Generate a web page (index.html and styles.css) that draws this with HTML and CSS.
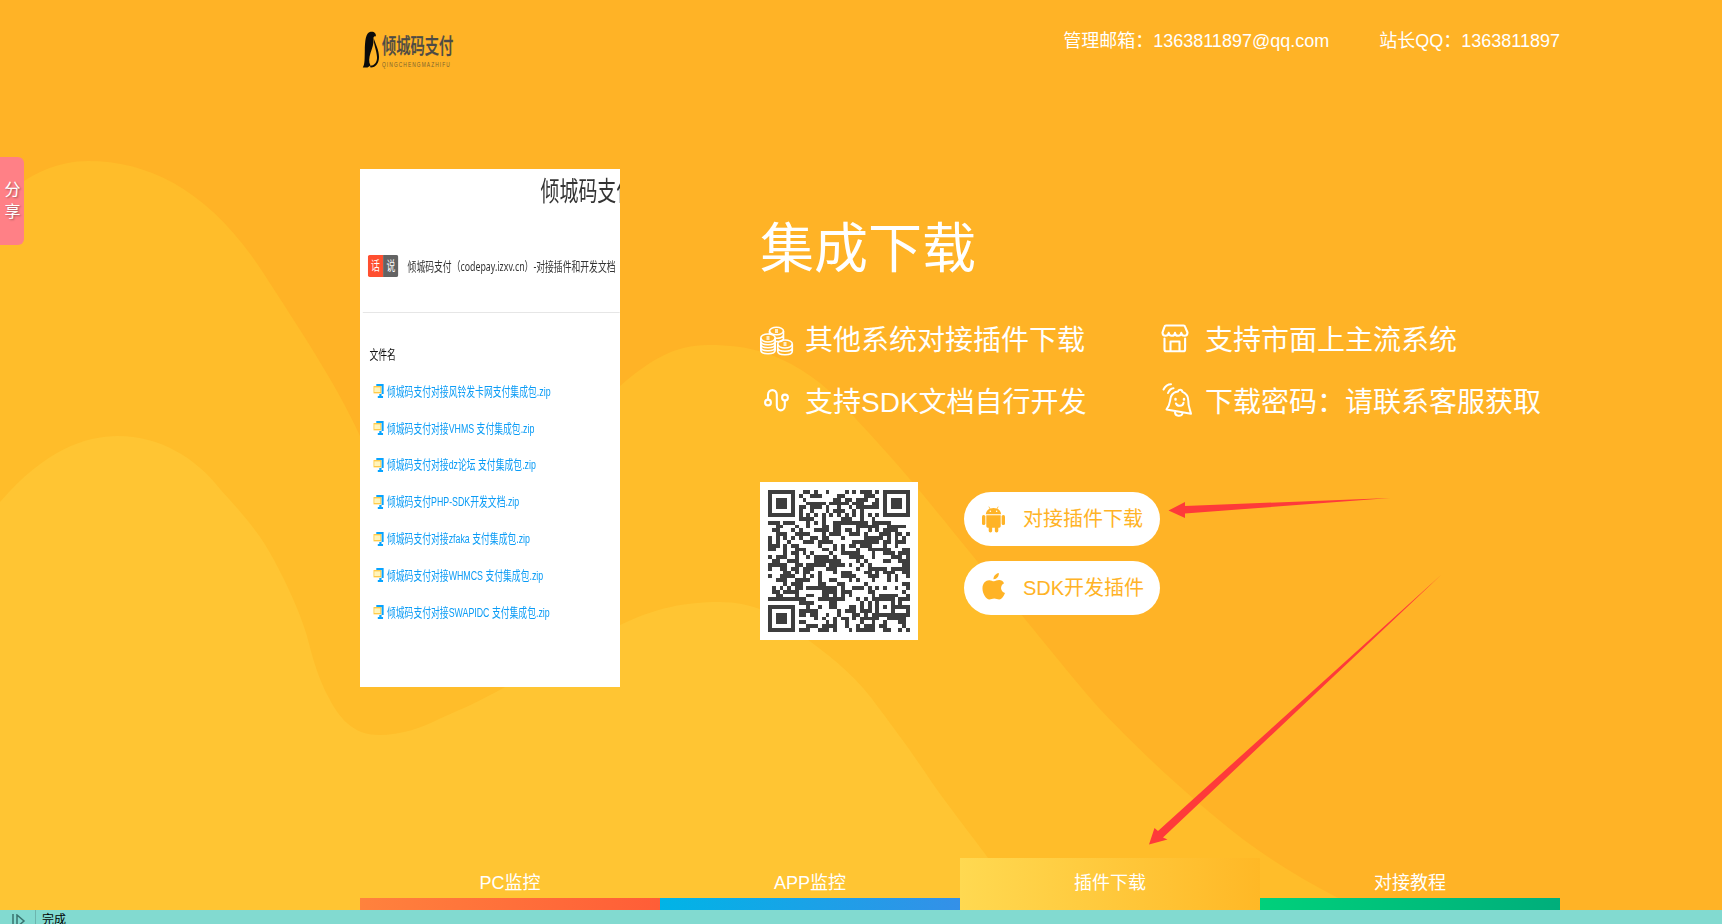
FILE: index.html
```html
<!DOCTYPE html>
<html lang="zh-CN">
<head>
<meta charset="utf-8">
<title>倾城码支付</title>
<link rel="stylesheet" href="styles.css">
</head>
<body>
<div class="page">
  <svg class="waves" viewBox="0 0 1722 910" aria-hidden="true">
    <path fill="#ffbd2a" d="M0 200C30 172 60 161 88 161C152 161 212 193 264 274C297 325 337 385 360 436C390 500 410 525 450 525C520 525 560 430 620 386C650 360 675 345 708 345C732 345 752 348 769 354C800 366 825 384 845 407C883 448 910 478 933 507C960 540 980 565 1010 601C1045 643 1070 675 1098 707C1135 746 1180 790 1244 840C1275 863 1307 882 1340 899L1362 910H0Z"/>
    <path fill="#ffc533" d="M0 502C45 450 85 436 118 436C160 436 196 458 220 489C243 514 261 535 274 560C290 590 300 613 307 636C313 660 319 680 329 698C342 724 358 735 379 735C400 735 422 728 439 719C462 709 482 700 505 687C545 664 580 644 620 625C655 608 685 602 719 602C755 602 780 616 807 639C837 661 860 681 878 707C900 736 915 757 933 784C952 811 970 833 994 866L1026 910H0Z"/>
  </svg>

  <div class="container">
    <header class="header">
      <div class="logo">
        <svg class="logo-mark" viewBox="0 0 18 38"><path fill="#0b0b0b" d="M.8 36.500C3 33 2.600 27 2.800 20C3 10 3.500 2 8.500.8C12 .2 14.500 2.500 13.800 5.500C12.500 4.800 11.200 5.500 11.500 8C12 13 10 17 8.500 22C7 27 6.500 31 8.500 34.500L5.500 36.500Z"/><path fill="#0b0b0b" d="M11.800 7.500C13.500 13 17 19 17 26C17 32.500 13.500 36.800 8.500 36.500L8 34.800C12.500 34.800 15.300 31 15 26C14.600 19 11.500 14 11.800 7.500Z"/></svg>
        <div class="logo-words"><span class="logo-cn">倾城码支付</span><span class="logo-en">QINGCHENGMAZHIFU</span></div>
      </div>
      <div class="contacts"><span>管理邮箱：1363811897@qq.com</span><span>站长QQ：1363811897</span></div>
    </header>

    <main class="main">
      <section class="shot">
        <div class="shot-inner">
          <h2 class="shot-title">倾城码支付</h2>
          <div class="notice"><span class="tag"><b>话</b><b class="dark">说</b></span><span class="notice-text">倾城码支付（codepay.izxv.cn）-对接插件和开发文档</span></div>
          <div class="rule"></div>
          <div class="col-name">文件名</div>
          <ul class="files">
            <li><svg class="zip" viewBox="0 0 14 14" preserveAspectRatio="none"><use href="#zip"/></svg>倾城码支付对接风铃发卡网支付集成包.zip</li>
            <li><svg class="zip" viewBox="0 0 14 14" preserveAspectRatio="none"><use href="#zip"/></svg>倾城码支付对接VHMS 支付集成包.zip</li>
            <li><svg class="zip" viewBox="0 0 14 14" preserveAspectRatio="none"><use href="#zip"/></svg>倾城码支付对接dz论坛 支付集成包.zip</li>
            <li><svg class="zip" viewBox="0 0 14 14" preserveAspectRatio="none"><use href="#zip"/></svg>倾城码支付PHP-SDK开发文档.zip</li>
            <li><svg class="zip" viewBox="0 0 14 14" preserveAspectRatio="none"><use href="#zip"/></svg>倾城码支付对接zfaka 支付集成包.zip</li>
            <li><svg class="zip" viewBox="0 0 14 14" preserveAspectRatio="none"><use href="#zip"/></svg>倾城码支付对接WHMCS 支付集成包.zip</li>
            <li><svg class="zip" viewBox="0 0 14 14" preserveAspectRatio="none"><use href="#zip"/></svg>倾城码支付对接SWAPIDC 支付集成包.zip</li>
          </ul>
        </div>
      </section>

      <section class="info">
        <h1 class="title">集成下载</h1>
        <div class="features">
          <div class="feature">
            <svg class="icon" viewBox="0 0 36 36" fill="none" stroke="#fff" stroke-width="1.600"><ellipse cx="16.500" cy="8" rx="7" ry="3.700"/><path d="M9.500 8v3M23.500 8v8M15 15c4 .8 8-.6 8.500-3M16 18.500c4 .5 7-.9 7.500-2.800"/><ellipse cx="8" cy="15" rx="7.200" ry="4"/><path d="M.8 15v12c0 5 14.400 5 14.400 0V15M.8 18c0 5 14.400 5 14.400 0M.8 21c0 5 14.400 5 14.400 0M.8 24c0 5 14.400 5 14.400 0"/><ellipse cx="25" cy="21" rx="7.300" ry="4"/><path d="M17.700 21v7c0 5 14.600 5 14.600 0v-7M17.700 24.500c0 5 14.600 5 14.600 0M15 7h3M15 9h3M6.500 14h3M6.500 16h3M23.500 20h3M23.500 22h3"/></svg>
            <span>其他系统对接插件下载</span></div>
          <div class="feature">
            <svg class="icon" viewBox="0 0 36 36" fill="none" stroke="#fff" stroke-width="2.100" stroke-linecap="round" stroke-linejoin="round"><path d="M6 2.500h17.500q1.300 0 1.600 1.300l2.400 5.700c0 4.300-5.600 4.300-6.200.3-.2 4-6 4-6.300 0-.3 4-6.100 4-6.300 0-.6 4-6.200 4-6.200-.3l2-5.700Q4.800 2.500 6 2.500ZM4.500 15.500v11q0 1.800 1.800 1.800h17q1.800 0 1.800-1.800v-11M10.500 28V18.500h9V28"/></svg>
            <span>支持市面上主流系统</span></div>
          <div class="feature">
            <svg class="icon" viewBox="0 0 36 36" fill="none" stroke="#fff" stroke-width="2.100"><circle cx="8" cy="17.500" r="2.900"/><circle cx="25" cy="12.500" r="2.900"/><path d="M8 14.500V10c0-6.500 8.800-6.500 8.800 0v10.500c0 6.500 8 6.500 8 0V15.500"/></svg>
            <span>支持SDK文档自行开发</span></div>
          <div class="feature">
            <svg class="icon" viewBox="0 0 36 36" fill="none" stroke="#fff" stroke-width="2" stroke-linecap="round" stroke-linejoin="round"><path d="M3.500 4.500C5 1.500 8-.8 11-.8M8 8C9 5.500 11 3.500 13.500 3.300M6.500 24.500c4-4.500 3-8.500 4.500-13 1.500-3.300 4-4.700 7-5 .4-2.400 4-2.300 4.300.2 4 1.800 6 5 6 9-.2 5 1.200 7.500 2.700 13ZM15 27.300c0 4.500 6.500 4.500 7.500 1.200"/><path d="M16 18.500c1.500 3.500 7 2.800 7.500-.7"/><path d="M15.500 14v.6M24 14v.6" stroke-width="2.500"/></svg>
            <span>下载密码：请联系客服获取</span></div>
        </div>
        <div class="downloads">
          <div class="qr"><svg id="qr" viewBox="0 0 37 37" shape-rendering="crispEdges"></svg></div>
          <div class="buttons">
            <a class="button"><svg class="os" viewBox="0 0 24 28" fill="#ffb326"><path d="M4 8.500C4.300 5.500 6 3.700 8 2.800L6.700.8 7.300.4 8.700 2.500Q12 1.400 15.300 2.500L16.700.4 17.300.8 16 2.800C18 3.700 19.700 5.500 20 8.500Z"/><path d="M4.500 9.500h15V21q0 1.500-1.500 1.500h-1V26q0 1.500-1.800 1.500T13.400 26v-3.500h-2.800V26q0 1.500-1.800 1.500T7 26v-3.500H6Q4.500 22.500 4.500 21Z"/><rect x="0" y="9.200" width="3.500" height="10.500" rx="1.600"/><rect x="20.500" y="9.200" width="3.500" height="10.500" rx="1.600"/><circle cx="8.700" cy="5.500" r=".8" fill="#fff"/><circle cx="15.300" cy="5.500" r=".8" fill="#fff"/></svg><span>对接插件下载</span></a>
            <a class="button"><svg class="os apple" viewBox="0 0 24 28" fill="#ffb326"><path d="M17.500 0C18 3.500 15 6.800 12 6.500 11.700 3.500 14.500.5 17.500 0Z"/><path d="M23 10.500C18.500 13 19 19 24 20.800C22.500 24.500 20.500 27.500 18 27.500C16 27.500 15 26.500 12.800 26.500C10.500 26.500 9.500 27.500 7.700 27.500C4.500 27.500.5 21.500.5 16C.5 10.500 4 7.500 7.500 7.500C9.500 7.500 11 8.600 12.500 8.600C14 8.600 15.500 7.300 18 7.300C20 7.300 22 8.500 23 10.500Z"/></svg><span>SDK开发插件</span></a>
          </div>
        </div>
      </section>
    </main>

    <nav class="tabs">
      <a class="tab pc">PC监控</a><a class="tab app">APP监控</a><a class="tab plugin">插件下载</a><a class="tab guide">对接教程</a>
    </nav>
  </div>

  <footer class="status">
    <svg class="status-icon" viewBox="0 0 14 14" fill="none" stroke="#39736f" stroke-width="1.500"><path d="M1 0v14M5 1v12l7-6Z"/></svg>
    <span class="status-text">完成</span>
  </footer>

  <div class="share"><span>分</span><span>享</span></div>
  <svg class="arrows" viewBox="0 0 1722 924" fill="#fe3a3a" aria-hidden="true">
    <path d="M1168.500 510.500L1185 502L1185 506L1390 498L1185 513.500L1185 518Z"/>
    <path d="M1149 844.500L1154.500 828L1158 831L1441 575L1163 837.500L1167.500 839.500Z"/>
  </svg>
  <svg width="0" height="0" class="defs"><defs><g id="zip"><path d="M4 0h10v10h-3v2h2v2H6v-2h2v-2h3V2H4Z" fill="#08a4ff"/><rect x=".7" y="2.700" width="9.300" height="6" fill="#fff5bd" stroke="#ffc943" stroke-width="1.300"/></g></defs></svg>
</div>
<script src="qr.js"></script>
</body>
</html>
```
FILE: styles.css
```css
* { box-sizing: border-box; }
body { margin: 0; overflow: hidden; font-family: "Liberation Sans", "Noto Sans CJK SC", sans-serif; }
.page { position: relative; width: 1722px; height: 924px; overflow: hidden; background: #ffb326; display: flex; flex-direction: column; }
.waves { position: absolute; left: 0; top: 0; width: 1722px; height: 910px; }
.arrows { position: absolute; left: 0; top: 0; width: 1722px; height: 924px; pointer-events: none; }
.defs { position: absolute; }
.container { position: relative; width: 1200px; height: 910px; margin-left: 360px; display: flex; flex-direction: column; }

.header { height: 169px; display: flex; justify-content: space-between; align-items: flex-start; }
.logo { display: flex; gap: 2px; padding: 31px 0 0 2px; }
.logo-mark { width: 18px; height: 38px; }
.logo-words { width: 80px; display: flex; flex-direction: column; color: #4c4a45; white-space: nowrap; }
.logo-cn { font-size: 21px; font-weight: 500; line-height: 30px; transform: scaleX(.68); transform-origin: left; -webkit-text-stroke: .3px #4c4a45; }
.logo-en { font-size: 7px; line-height: 8px; letter-spacing: 1.600px; color: #77602f; transform: scaleX(.69); transform-origin: left; }
.contacts { display: flex; gap: 50px; padding-top: 27px; font-size: 18px; line-height: 28px; color: #fff; }

.main { height: 689px; display: flex; }
.shot { width: 260px; height: 518px; background: #fff; overflow: hidden; }
.shot-inner { width: 371.400px; height: 518px; transform: scaleX(.7); transform-origin: left top; white-space: nowrap; color: #333; }
.shot-title { margin: 0; padding: 2px 0 0 258px; height: 86px; font-size: 27px; font-weight: normal; line-height: 43px; }
.notice { display: flex; align-items: center; height: 22px; padding-left: 11px; font-family: "Noto Sans", "Noto Sans CJK SC", sans-serif; font-size: 12.600px; }
.notice-text { margin-top: -1px; }
.tag { display: flex; width: 44px; height: 22px; border-radius: 3px; overflow: hidden; margin-right: 13px; }
.tag b { width: 22px; background: #ff4f30; color: #fff; font-weight: normal; text-align: center; line-height: 22px; }
.tag .dark { background: #636363; }
.rule { margin: 35px 0 0 4px; height: 1px; background: #e6e6e6; }
.col-name { margin-top: 31px; padding-left: 13.500px; font-size: 12.600px; line-height: 22px; color: #111; }
.files { list-style: none; margin: 6px 0 0; padding: 0; font-size: 12.600px; color: #0a9bf5; }
.files li { height: 36.800px; display: flex; align-items: center; padding-left: 18.500px; }
.zip { width: 15px; height: 14px; margin: 2px 5px 0 0; }

.info { margin-left: 140px; width: 800px; color: #fff; }
.title { margin: 0; padding-top: 40px; font-size: 54px; font-weight: normal; line-height: 80px; }
.features { display: grid; grid-template-columns: 400px 400px; grid-auto-rows: 62px; margin-top: 21px; }
.feature { display: flex; align-items: center; font-size: 28px; white-space: nowrap; line-height: 40px; }
.icon { width: 36px; height: 36px; margin-right: 9px; overflow: visible; }
.downloads { display: flex; margin-top: 48px; }
.qr { width: 158px; height: 158px; padding: 8px; background: #fff; }
.qr svg { display: block; width: 142px; height: 142px; }
.buttons { margin: 10px 0 0 46px; display: flex; flex-direction: column; gap: 15px; }
.button { width: 196px; height: 54px; border-radius: 27px; background: #fff; color: #ffb326; display: flex; align-items: center; padding-left: 18px; font-size: 20px; line-height: 30px; }
.os { width: 23px; height: 27px; margin-right: 18px; }
.apple { margin-top: -3px; }

.tabs { display: flex; height: 52px; }
.tab { width: 300px; height: 52px; padding-top: 11px; text-align: center; color: #fff; font-size: 18px; line-height: 28px; background-repeat: no-repeat; background-position: bottom; background-size: 100% 12px; }
.pc { background-image: linear-gradient(90deg, #ff823d, #ff5d37); }
.app { background-image: linear-gradient(90deg, #00b4e6, #3490e8); }
.plugin { background-image: linear-gradient(90deg, #ffd951, #ffb826); background-size: 100% 100%; }
.guide { background-image: linear-gradient(90deg, #00d07b, #00ae7b); }

.status { position: relative; height: 14px; background: #82dad0; display: flex; overflow: hidden; }
.status-icon { width: 14px; height: 14px; margin: 4px 9px 0 12px; flex: none; }
.status-text { height: 14px; border-left: 1px solid #6cb5ae; padding: 2px 0 0 6px; font-size: 12px; line-height: 17px; color: #000; }

.share { position: absolute; left: 0; top: 157px; width: 24px; height: 88px; padding-left: 1px; border-radius: 0 6px 6px 0; background: #ff8086; color: #fff; font-size: 16px; line-height: 22px; display: flex; flex-direction: column; align-items: center; justify-content: center; text-shadow: 1px 1px 2px rgba(0,0,0,.35); }
```
FILE: qr.js
```js
// Builds the code's finder, timing, alignment and data modules on a 37 x 37 grid.
const size = 37;
let seed = 20519;
const next = () => (seed = (seed * 1103515245 + 12345) % 2147483648) / 2147483648;
const ring = (x, y, cx, cy) => Math.max(Math.abs(x - cx), Math.abs(y - cy));
let d = '';
for (let y = 0; y < size; y++) {
  for (let x = 0; x < size; x++) {
    let on = next() < 0.5;
    if (x === 6 || y === 6) on = (x + y) % 2 === 0;
    const a = ring(x, y, 30, 30);
    if (a <= 2) on = a !== 1;
    for (const [cx, cy] of [[3, 3], [33, 3], [3, 33]]) {
      const r = ring(x, y, cx, cy);
      if (r <= 4) on = r !== 2 && r !== 4;
    }
    if (on) d += `M${x} ${y}h1v1h-1z`;
  }
}
document.getElementById('qr').innerHTML = `<path fill="#3e3e3e" d="${d}"/>`;
```
